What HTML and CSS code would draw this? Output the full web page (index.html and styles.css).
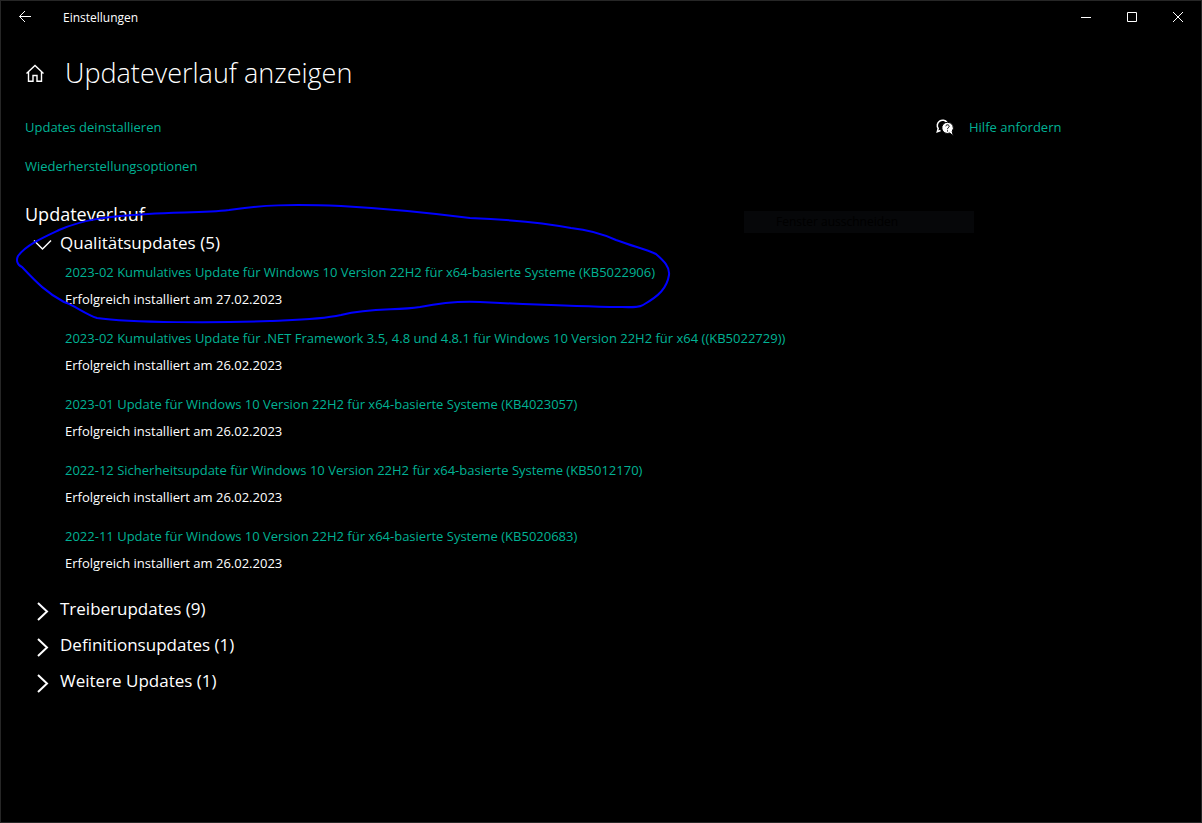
FILE: index.html
```
<!DOCTYPE html>
<html lang="de">
<head>
  <meta charset="UTF-8">
  <meta name="viewport" content="width=device-width, initial-scale=1.0">
  <title>Einstellungen</title>
  <link rel="stylesheet" href="styles.css">
</head>
<body>
  <div class="window">
    <header class="titlebar">
      <button class="back" aria-label="Zurück">
        <svg width="14" height="14" viewBox="0 0 14 14"><path d="M13 6.5H1.5M7 1L1.5 6.5L7 12"/></svg>
      </button>
      <span class="app-name">Einstellungen</span>
      <button class="win-btn" aria-label="Minimieren">
        <svg width="12" height="12" viewBox="0 0 12 12"><path d="M1 6.5H11"/></svg>
      </button>
      <button class="win-btn" aria-label="Maximieren">
        <svg width="12" height="12" viewBox="0 0 12 12"><path d="M1.5 1.5H10.5V10.5H1.5Z"/></svg>
      </button>
      <button class="win-btn" aria-label="Schließen">
        <svg width="12" height="12" viewBox="0 0 12 12"><path d="M1 1L11 11M11 1L1 11"/></svg>
      </button>
    </header>

    <div class="page-head">
      <a class="home" href="#" aria-label="Startseite">
        <svg width="20" height="20" viewBox="0 0 20 20"><path d="M1.5 10.5L10 2.5L18.500 10.5M3.500 9V18.300H8V12.500H12V18.300H16.500V9"/></svg>
      </a>
      <h1>Updateverlauf anzeigen</h1>
    </div>

    <div class="content">
      <main>
        <nav class="links">
          <a href="#">Updates deinstallieren</a>
          <a href="#">Wiederherstellungsoptionen</a>
        </nav>

        <h2>Updateverlauf</h2>

        <details open>
          <summary>
            <svg class="chevron" width="18" height="18" viewBox="0 0 18 18"><path d="M1 4.500L9.500 13L18 4.500"/></svg>
            Qualitätsupdates (5)
          </summary>
          <ul class="updates">
            <li>
              <a href="#">2023-02 Kumulatives Update für Windows 10 Version 22H2 für x64-basierte Systeme (KB5022906)</a>
              <p>Erfolgreich installiert am 27.02.2023</p>
            </li>
            <li>
              <a href="#">2023-02 Kumulatives Update für .NET Framework 3.5, 4.8 und 4.8.1 für Windows 10 Version 22H2 für x64 ((KB5022729))</a>
              <p>Erfolgreich installiert am 26.02.2023</p>
            </li>
            <li>
              <a href="#">2023-01 Update für Windows 10 Version 22H2 für x64-basierte Systeme (KB4023057)</a>
              <p>Erfolgreich installiert am 26.02.2023</p>
            </li>
            <li>
              <a href="#">2022-12 Sicherheitsupdate für Windows 10 Version 22H2 für x64-basierte Systeme (KB5012170)</a>
              <p>Erfolgreich installiert am 26.02.2023</p>
            </li>
            <li>
              <a href="#">2022-11 Update für Windows 10 Version 22H2 für x64-basierte Systeme (KB5020683)</a>
              <p>Erfolgreich installiert am 26.02.2023</p>
            </li>
          </ul>
        </details>
        <details>
          <summary>
            <svg class="chevron" width="18" height="18" viewBox="0 0 18 18"><path d="M5 1L14 9.500L5 18"/></svg>
            Treiberupdates (9)
          </summary>
        </details>
        <details>
          <summary>
            <svg class="chevron" width="18" height="18" viewBox="0 0 18 18"><path d="M5 1L14 9.500L5 18"/></svg>
            Definitionsupdates (1)
          </summary>
        </details>
        <details>
          <summary>
            <svg class="chevron" width="18" height="18" viewBox="0 0 18 18"><path d="M5 1L14 9.500L5 18"/></svg>
            Weitere Updates (1)
          </summary>
        </details>
      </main>

      <aside>
        <svg class="help-icon" width="18" height="18" viewBox="0 0 18 18">
          <path class="bubble-back" d="M4.500 11.500L1.300 12.800L2.200 9.500A5 5 0 1 1 11 3.500"/>
          <path class="bubble-front" d="M11.500 3.300a5.600 5.600 0 1 0 2.200 10.700L17.300 16.800L16.200 12.300A5.600 5.600 0 0 0 11.500 3.300Z"/>
          <path class="question" d="M9.800 7.300a1.700 1.500 0 1 1 2.600 1.300Q11.500 9.200 11.500 10.200M11.500 11.300V12.500"/>
        </svg>
        <a href="#">Hilfe anfordern</a>
      </aside>
    </div>

    <div class="snip-hint">Fenster ausschneiden</div>

    <!-- Markierung um das neueste Update -->
    <svg class="marker" width="680" height="340" viewBox="0 0 680 340">
      <path d="M18 256C26 245 44 237 59 230C84 219 111 216 148 214C180 212 205 213 229 210C262 205 290 204 341 206C395 209 430 213 470 218C520 220 550 224 571 228C590 230 605 235 616 240C635 247 645 249 656 254C664 261 670 267 669 275C667 288 659 296 643 305C639 308 630 307 610 307C560 306 520 304 480 302C460 301 440 303 420 307C395 311 373 307 341 315C318 320 290 320 270 321C220 323 130 323 97 318C85 314 74 305 64 302C47 293 37 283 22 267C17 265 16 260 18 256"/>
    </svg>
  </div>
</body>
</html>
```
FILE: styles.css
```
* {
  box-sizing: border-box;
}

body {
  margin: 0;
  background: #000;
  color: #fff;
  font-family: "Open Sans", "Noto Sans", sans-serif;
  font-size: 13px;
  line-height: 27px;
}

.window {
  position: relative;
  min-height: 100vh;
  border: 1px solid #262626;
}

svg {
  display: block;
  flex: none;
  fill: none;
  stroke: #fff;
}

a {
  color: #00b294;
  text-decoration: none;
}

a:hover {
  color: #999;
}

button {
  display: flex;
  align-items: center;
  justify-content: center;
  height: 32px;
  padding: 0;
  border: 0;
  background: none;
}

/* Titelleiste */
.titlebar {
  display: flex;
  align-items: center;
}

.back {
  width: 48px;
}

.app-name {
  flex: 1;
  padding-left: 14px;
  font-size: 12px;
}

.win-btn {
  width: 46px;
}

.page-head {
  display: flex;
  align-items: center;
  gap: 20px;
  padding: 20px 24px 21px;
}

.home svg {
  stroke-width: 1.4;
}

h1 {
  margin: 0;
  font-size: 27px;
  font-weight: 300;
  line-height: 40px;
}

/* Inhalt */
.content {
  display: flex;
  align-items: flex-start;
  padding: 0 24px;
}

main {
  flex: 1;
}

aside {
  display: flex;
  align-items: center;
  gap: 15px;
  width: 241px;
}

.links {
  display: flex;
  flex-direction: column;
  align-items: flex-start;
  gap: 12px;
}

h2 {
  margin: 19px 0 0;
  font-size: 18px;
  font-weight: 400;
  line-height: 30px;
}

summary {
  display: flex;
  align-items: center;
  gap: 9px;
  height: 36px;
  padding: 0 0 2px 8px;
  font-size: 17px;
  list-style: none;
  cursor: pointer;
}

details[open] summary {
  height: 30px;
  padding-bottom: 4px;
}

.chevron {
  margin-top: 6px;
  overflow: visible;
  stroke-width: 2;
}

details[open] .chevron {
  stroke-width: 1.5;
}

.updates {
  display: flex;
  flex-direction: column;
  gap: 12px;
  margin: 0;
  padding: 0 0 14px 40px;
  list-style: none;
}

.updates a {
  display: block;
}

.updates p {
  margin: 0;
}

.help-icon {
  overflow: visible;
}

.bubble-back {
  stroke-width: 1.5;
}

.bubble-front {
  fill: #fff;
  stroke: #000;
}

.question {
  stroke: #000;
}

.snip-hint {
  position: absolute;
  top: 210px;
  left: 743px;
  width: 230px;
  padding-left: 32px;
  background: #060709;
  color: #000;
  font-size: 12px;
  line-height: 22px;
}

.marker {
  position: absolute;
  top: -1px;
  left: -1px;
  stroke: #00f;
  stroke-width: 2;
  pointer-events: none;
}
```
